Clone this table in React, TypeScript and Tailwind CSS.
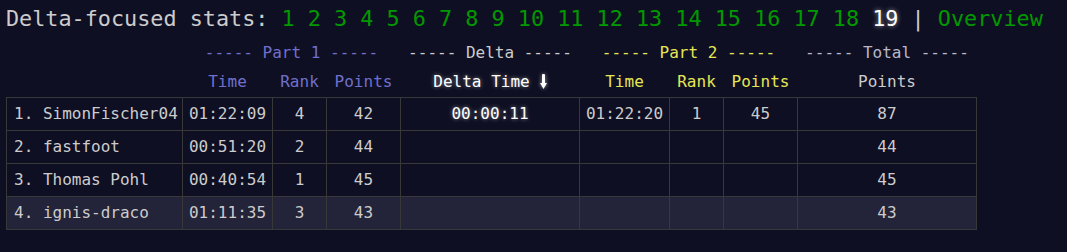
const days = [1, 2, 3, 4, 5, 6, 7, 8, 9, 10, 11, 12, 13, 14, 15, 16, 17, 18];

type Row = {
  name: string;
  p1Time: string;
  p1Rank: string;
  p1Points: string;
  delta: string;
  p2Time: string;
  p2Rank: string;
  p2Points: string;
  total: string;
};

const rows: Row[] = [
  { name: '1. SimonFischer04', p1Time: '01:22:09', p1Rank: '4', p1Points: '42', delta: '00:00:11', p2Time: '01:22:20', p2Rank: '1', p2Points: '45', total: '87' },
  { name: '2. fastfoot', p1Time: '00:51:20', p1Rank: '2', p1Points: '44', delta: '', p2Time: '', p2Rank: '', p2Points: '', total: '44' },
  { name: '3. Thomas Pohl', p1Time: '00:40:54', p1Rank: '1', p1Points: '45', delta: '', p2Time: '', p2Rank: '', p2Points: '', total: '45' },
  { name: '4. ignis-draco', p1Time: '01:11:35', p1Rank: '3', p1Points: '43', delta: '', p2Time: '', p2Rank: '', p2Points: '', total: '43' },
];

const cell = 'border border-[#383838] text-center p-0';

const App = () => {
  return (
    <div className="min-h-[252px] bg-[#0f0f23] px-[6px] font-['DejaVu_Sans_Mono',monospace] text-[#cccccc]">
      {/* ---------------- title / day links ---------------- */}
      <div className="h-[38px] flex items-center whitespace-pre text-[21.8px] leading-none">
        <span>Delta-focused stats: </span>
        {days.map((d) => (
          <span key={d}>
            <span className="text-[#009900]">{d}</span>{' '}
          </span>
        ))}
        <span className="text-white [text-shadow:0_0_5px_rgba(255,255,255,0.6)]">19</span>
        <span> | </span>
        <span className="text-[#009900]">Overview</span>
      </div>

      {/* ---------------- stats table ---------------- */}
      <table className="table-fixed border-collapse text-[16px] leading-none w-[970px]">
        <colgroup>
          <col className="w-[176px]" />
          <col className="w-[90px]" />
          <col className="w-[54px]" />
          <col className="w-[74px]" />
          <col className="w-[179px]" />
          <col className="w-[90px]" />
          <col className="w-[54px]" />
          <col className="w-[74px]" />
          <col className="w-[179px]" />
        </colgroup>
        <thead>
          <tr className="h-[29px] whitespace-pre">
            <th className="p-0"></th>
            <th colSpan={3} className="p-0 font-normal text-[#7070cc]">----- Part 1 -----</th>
            <th className="p-0 font-normal text-[#cccccc]">----- Delta -----</th>
            <th colSpan={3} className="p-0 font-normal text-[#e6e655]">----- Part 2 -----</th>
            <th className="p-0 font-normal text-[#b8b8c8]">----- Total -----</th>
          </tr>
          <tr className="h-[30px] whitespace-pre">
            <th className="p-0"></th>
            <th className="p-0 font-normal text-[#7070cc]">Time</th>
            <th className="p-0 font-normal text-[#7070cc]">Rank</th>
            <th className="p-0 font-normal text-[#7070cc]">Points</th>
            <th className="p-0 font-normal text-white [text-shadow:0_0_4px_rgba(255,255,255,0.5)]">
              <span className="inline-flex items-center gap-[10px]">
                Delta Time
                <svg
                  width="7"
                  height="15"
                  viewBox="0 0 7 15"
                  className="[filter:drop-shadow(0_0_2px_rgba(255,255,255,0.6))]"
                >
                  <rect x="2" y="0" width="3" height="10" rx="1" fill="#ffffff" />
                  <path d="M0 9 L7 9 L3.5 15 Z" fill="#ffffff" />
                </svg>
              </span>
            </th>
            <th className="p-0 font-normal text-[#e6e655]">Time</th>
            <th className="p-0 font-normal text-[#e6e655]">Rank</th>
            <th className="p-0 font-normal text-[#e6e655]">Points</th>
            <th className="p-0 font-normal text-[#cccccc]">Points</th>
          </tr>
        </thead>
        <tbody>
          {rows.map((r, i) => (
            <tr key={r.name} className={`h-[33px] whitespace-pre ${i === 3 ? 'bg-[#232339]' : ''}`}>
              <td className="border border-[#383838] text-left pl-[7px] p-0">{r.name}</td>
              <td className={cell}>{r.p1Time}</td>
              <td className={cell}>{r.p1Rank}</td>
              <td className={cell}>{r.p1Points}</td>
              <td className={`${cell} text-white [text-shadow:0_0_4px_rgba(255,255,255,0.5)]`}>{r.delta}</td>
              <td className={cell}>{r.p2Time}</td>
              <td className={cell}>{r.p2Rank}</td>
              <td className={cell}>{r.p2Points}</td>
              <td className={cell}>{r.total}</td>
            </tr>
          ))}
        </tbody>
      </table>
    </div>
  );
};

export default App;
